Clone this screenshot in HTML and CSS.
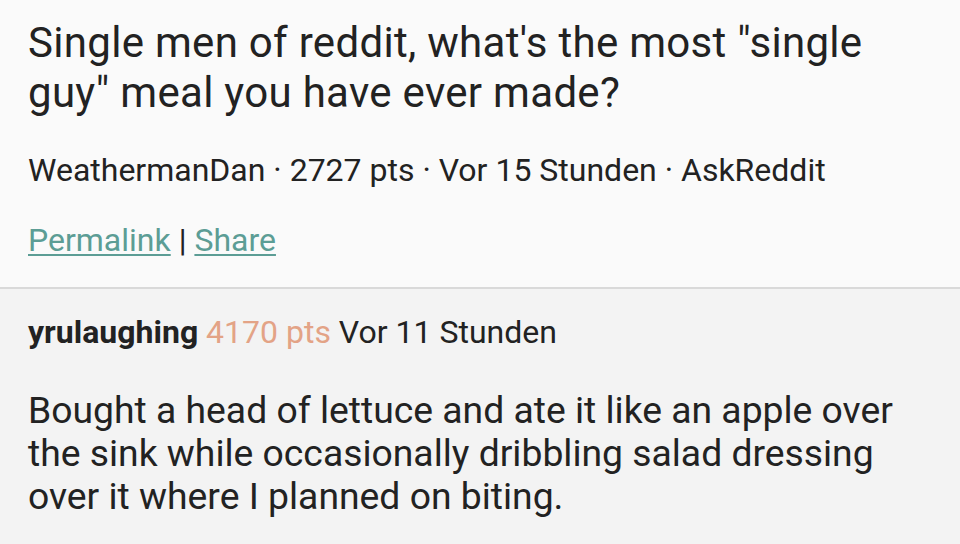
FILE: index.html
```html
<!DOCTYPE html>
<html>
<head>
<meta charset="utf-8">
<link rel="stylesheet" href="styles.css">
</head>
<body>
<section class="post">
  <h1 class="title">Single men of reddit, what's the most "single guy" meal you have ever made?</h1>
  <div class="meta">WeathermanDan · 2727 pts · Vor 15 Stunden · AskReddit</div>
  <div class="links"><a class="link" href="#">Permalink</a> | <a class="link" href="#">Share</a></div>
</section>
<section class="comment">
  <div class="head"><span class="user">yrulaughing</span> <span class="pts">4170 pts</span> Vor 11 Stunden</div>
  <p class="text">Bought a head of lettuce and ate it like an apple over the sink while occasionally dribbling salad dressing over it where I planned on biting.</p>
</section>
</body>
</html>
```
FILE: styles.css
```css
html, body {
  margin: 0;
  padding: 0;
  height: 100%;
}
body {
  font-family: Roboto, "Noto Sans", sans-serif;
  color: #222222;
  background: #f3f3f3;
  width: 960px;
  height: 544px;
  overflow: hidden;
}
.post {
  background: #fafafa;
  padding: 18px 28px 28px;
  border-bottom: 2px solid #d9d9d9;
}
.title {
  margin: 0;
  font-size: 42px;
  line-height: 50px;
  letter-spacing: 0.3px;
  font-weight: 400;
}
.meta {
  margin-top: 33px;
  font-size: 32px;
  line-height: 38px;
}
.links {
  margin-top: 32px;
  font-size: 32px;
  line-height: 38px;
}
.link {
  color: #5c9d95;
  text-decoration: underline;
  text-decoration-thickness: 2px;
  text-underline-offset: 3px;
}
.comment {
  padding: 24px 28px 0;
}
.head {
  font-size: 32px;
  line-height: 38px;
}
.user {
  font-weight: 700;
}
.pts {
  color: #e3a386;
}
.text {
  margin: 38px 0 0;
  font-size: 37.3px;
  line-height: 43px;
}
```
